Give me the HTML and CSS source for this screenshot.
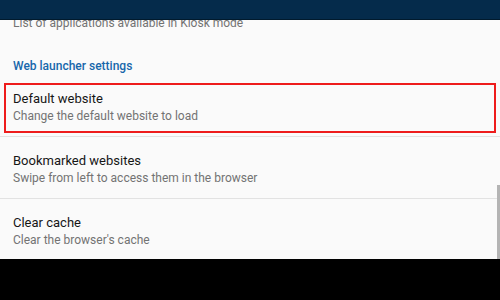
FILE: index.html
```html
<!DOCTYPE html>
<html>
<head>
<meta charset="utf-8">
<link rel="stylesheet" href="styles.css">
</head>
<body>
<div class="screen">
  <div class="appbar"></div>
  <div class="list">
    <div class="pref-partial">
      <div class="summary">List of applications available in Kiosk mode</div>
    </div>
    <div class="category">Web launcher settings</div>
    <div class="pref focused">
      <div class="title">Default website</div>
      <div class="summary">Change the default website to load</div>
      <div class="focus-ring"></div>
    </div>
    <div class="pref">
      <div class="title">Bookmarked websites</div>
      <div class="summary">Swipe from left to access them in the browser</div>
    </div>
    <div class="pref">
      <div class="title">Clear cache</div>
      <div class="summary">Clear the browser's cache</div>
    </div>
    <div class="scrollbar"></div>
  </div>
  <div class="navbar"></div>
</div>
</body>
</html>
```
FILE: styles.css
```css
* { box-sizing: border-box; }
html, body { margin: 0; padding: 0; }
body {
  width: 500px;
  height: 300px;
  overflow: hidden;
  font-family: Roboto, "Noto Sans", sans-serif;
  background: #000;
}
.screen {
  display: flex;
  flex-direction: column;
  height: 300px;
}
.appbar {
  height: 20px;
  flex: none;
  background: #052b4b;
  border-bottom: 1px solid #011a2d;
}
.list {
  position: relative;
  height: 239px;
  flex: none;
  overflow: hidden;
  background: #fafafa;
}
.pref-partial {
  margin-top: -5px;
  padding: 0 13px 13px;
}
.category {
  padding: 14px 13px 0;
  height: 31px;
  font-size: 12px;
  line-height: 16px;
  font-weight: 500;
  color: #1767ab;
}
.pref {
  position: relative;
  height: 62px;
  padding: 15px 13px 0;
  border-bottom: 1px solid #e2e2e2;
}
.title {
  font-size: 13px;
  line-height: 18px;
  color: #161616;
}
.summary {
  font-size: 12px;
  line-height: 16px;
  color: #737373;
}
.focus-ring {
  position: absolute;
  left: 4px;
  right: 4px;
  top: 8px;
  height: 50px;
  border: 2px solid #ee1c1c;
}
.scrollbar {
  position: absolute;
  right: 0;
  top: 165px;
  width: 3px;
  height: 74px;
  background: #b4b4b4;
}
.navbar {
  flex: 1;
  background: #000;
}
```
